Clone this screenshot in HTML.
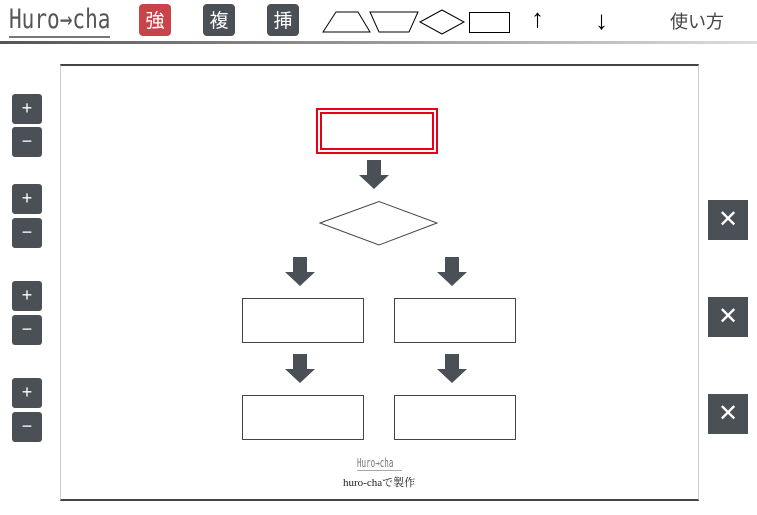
<!DOCTYPE html>
<html><head><meta charset="utf-8"><style>
*{margin:0;padding:0;box-sizing:border-box}
body{width:757px;height:515px;background:#fff;position:relative;overflow:hidden;font-family:"Liberation Sans","Noto Sans CJK JP",sans-serif}
.a{position:absolute}
.hb{position:absolute;top:4px;width:32px;height:32px;border-radius:4px;color:#fff;font-size:19px;line-height:32px;text-align:center;font-family:"Noto Sans CJK JP",sans-serif}
.pm{position:absolute;left:12px;width:30px;height:30px;background:#4a5056;border-radius:3px;color:#fff;text-align:center;line-height:29px;font-size:18px}
.x{position:absolute;left:708px;width:40px;height:40px;background:#4a5056;color:#fff;text-align:center;line-height:40px;font-size:24px}
.box{position:absolute;border:1px solid #444;background:#fff}
</style></head><body>
<div class="a" style="left:9px;top:4px;width:101px;height:34px;border-bottom:2px solid #777;overflow:hidden">
<div style="font-size:27px;color:#555;font-family:'DejaVu Sans Mono',monospace;line-height:32px;transform:scaleX(0.78);transform-origin:0 0;white-space:nowrap">Huro→cha</div></div>
<div class="hb" style="left:139px;background:#c9444a">強</div>
<div class="hb" style="left:203px;background:#4a5056">複</div>
<div class="hb" style="left:267px;background:#4a5056">挿</div>
<svg class="a" style="left:0;top:0" width="757" height="45">
<polygon points="323,32 336,12 358,12 370,32" fill="none" stroke="#000" stroke-width="1"/>
<polygon points="370,12 418,12 409,32 379,32" fill="none" stroke="#000"/>
<polygon points="420,22 442,10 464,22 442,34" fill="none" stroke="#000"/>
<rect x="469.5" y="12.5" width="40" height="20" fill="none" stroke="#000"/>
<defs><linearGradient id="g" x1="0" x2="1"><stop offset="0" stop-color="#555"/><stop offset="1" stop-color="#ddd"/></linearGradient></defs>
<rect x="0" y="41" width="757" height="3" fill="url(#g)"/>
</svg>
<div class="a" style="left:531px;top:3px;font-size:26px">↑</div>
<div class="a" style="left:595px;top:5px;font-size:26px">↓</div>
<div class="a" style="left:670px;top:8px;font-size:18px;color:#444">使い方</div>

<div class="a" style="left:60px;top:64px;width:639px;height:437px;border:1px solid #ccc;border-top:2px solid #444;border-bottom:2px solid #444"></div>

<div class="pm" style="top:94px">+</div><div class="pm" style="top:127px">−</div>
<div class="pm" style="top:184px">+</div><div class="pm" style="top:218px">−</div>
<div class="pm" style="top:281px">+</div><div class="pm" style="top:315px">−</div>
<div class="pm" style="top:378px">+</div><div class="pm" style="top:412px">−</div>
<div class="x" style="top:200px">✕</div>
<div class="x" style="top:297px">✕</div>
<div class="x" style="top:394px">✕</div>

<div class="a" style="left:316px;top:108px;width:122px;height:46px;border:2px solid #e6001a"></div>
<div class="a" style="left:320px;top:112px;width:114px;height:38px;border:2px solid #e6001a"></div>
<svg class="a" style="left:0;top:0" width="757" height="515">
<g fill="#4a5056">
<polygon points="367,160 381,160 381,175 389,175 374,189 359,175 367,175"/>
<polygon points="293,257 307,257 307,272 315,272 300,286 285,272 293,272"/>
<polygon points="445,257 459,257 459,272 467,272 452,286 437,272 445,272"/>
<polygon points="293,354 307,354 307,369 315,369 300,383 285,369 293,369"/>
<polygon points="445,354 459,354 459,369 467,369 452,383 437,369 445,369"/>
</g>
<polygon points="320,223 379,201.5 437,223 379,245" fill="#fff" stroke="#444"/>
</svg>
<div class="box" style="left:242px;top:298px;width:122px;height:45px"></div>
<div class="box" style="left:394px;top:298px;width:122px;height:45px"></div>
<div class="box" style="left:242px;top:395px;width:122px;height:45px"></div>
<div class="box" style="left:394px;top:395px;width:122px;height:45px"></div>
<div class="a" style="left:357px;top:457px;width:45px;height:14px;border-bottom:1px solid #aaa;overflow:hidden">
<div style="font-size:12px;color:#777;font-family:'DejaVu Sans Mono',monospace;line-height:13px;transform:scaleX(0.63);transform-origin:0 0;white-space:nowrap">Huro→cha</div></div>
<div class="a" style="left:343px;top:474px;font-size:11px;color:#222;font-family:'Liberation Serif','Noto Serif CJK SC',serif">huro-chaで製作</div>
</body></html>
